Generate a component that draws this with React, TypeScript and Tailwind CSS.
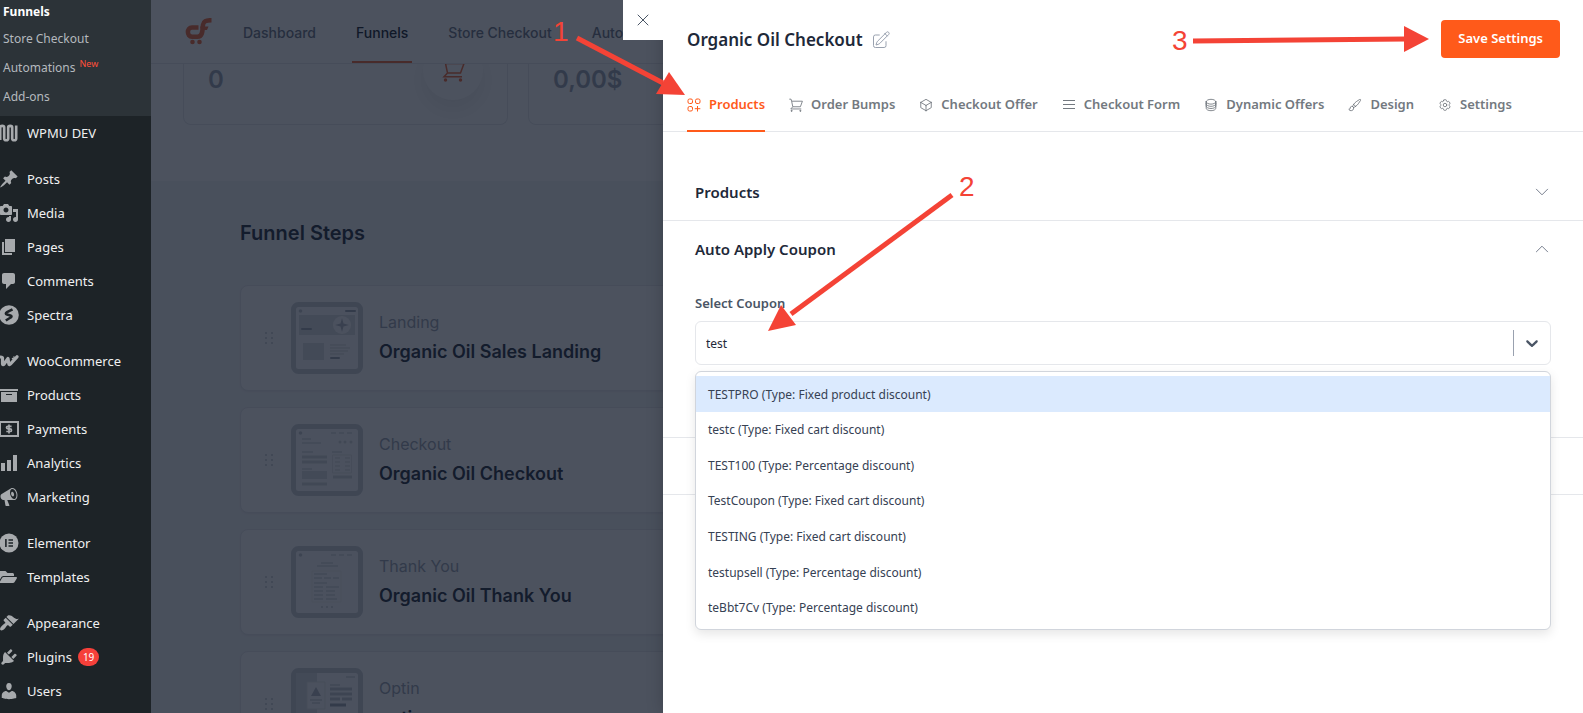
import { useState, type ReactNode } from 'react';
import clsx from 'clsx';
import { FaFolderOpen } from 'react-icons/fa';
import {
  HiOutlineChevronDown,
  HiOutlineChevronUp,
  HiOutlineCircleStack,
  HiOutlineCog6Tooth,
  HiOutlineCube,
  HiOutlinePaintBrush,
  HiOutlinePencilSquare,
  HiOutlineXMark,
} from 'react-icons/hi2';

function Dash({ d }: { d: string }) {
  return (
    <svg viewBox="0 0 20 20" className="size-5 fill-current" aria-hidden="true">
      <path fillRule="evenodd" d={d} />
    </svg>
  );
}

const ICONS = {
  post: 'M10.44 3.02l1.82-1.82 6.36 6.35-1.83 1.82c-1.05-.68-2.48-.57-3.41.36l-.75.75c-.92.93-1.04 2.35-.35 3.41l-1.83 1.82-2.41-2.41-2.8 2.79c-.42.42-3.38 2.71-3.8 2.29s1.86-3.39 2.28-3.81l2.79-2.79L4.1 9.36l1.83-1.82c1.05.69 2.48.57 3.4-.36l.75-.75c.93-.92 1.05-2.35.36-3.41z',
  media: 'M13 11V4c0-.55-.45-1-1-1h-1.67L9 1H5L3.67 3H2c-.55 0-1 .45-1 1v7c0 .55.45 1 1 1h10c.55 0 1-.45 1-1zM7 4.5c1.38 0 2.5 1.12 2.5 2.5S8.38 9.5 7 9.5 4.5 8.38 4.5 7 5.62 4.5 7 4.5zM14 6h5v10.5c0 1.38-1.12 2.5-2.5 2.5S14 17.88 14 16.5s1.12-2.5 2.5-2.5c.17 0 .34.02.5.05V9h-3V6zm-4 8.05V13h2v3.5c0 1.38-1.12 2.5-2.5 2.5S7 17.88 7 16.5 8.12 14 9.5 14c.17 0 .34.02.5.05z',
  page: 'M6 15V2h10v13H6zm-1 1h8v2H3V5h2v11z',
  comments: 'M5 2h9c1.1 0 2 .9 2 2v7c0 1.1-.9 2-2 2h-2l-5 5v-5H5c-1.1 0-2-.9-2-2V4c0-1.1.9-2 2-2z',
  archive: 'M19 4v2H1V4h18zM2 7h16v10H2V7zm11 3V9H7v1h6z',
  chart: 'M18 18V2h-4v16h4zm-6 0V7H8v11h4zm-6 0v-8H2v8h4z',
  megaphone: 'M18.15 5.94c.46 1.62.38 3.22-.02 4.48-.42 1.28-1.26 2.18-2.3 2.48-.16.06-.26.06-.4.06-.06.02-.12.02-.18.02-.06.02-.14.02-.22.02h-6.8l2.22 5.5c.02.14-.06.26-.14.34-.08.1-.24.16-.34.16H6.95c-.1 0-.26-.06-.34-.16-.08-.08-.16-.2-.14-.34l-1-5.5H4.25l-.02-.02c-.5.06-1.08-.18-1.54-.62s-.88-1.08-1.06-1.88c-.24-.8-.2-1.56-.02-2.2.18-.62.58-1.08 1.06-1.3l.02-.02 9-5.4c.1-.06.18-.1.24-.16.06-.04.14-.08.24-.12.16-.08.28-.12.5-.18 1.04-.3 2.24.1 3.22.98s1.84 2.24 2.26 3.86zm-2.58 5.98h-.02c.4-.1.74-.34 1.04-.7.58-.7.86-1.76.86-3.04 0-.64-.1-1.3-.28-1.98-.34-1.36-1.02-2.5-1.78-3.24s-1.68-1.1-2.46-.88c-.82.22-1.4.96-1.7 2-.32 1.04-.28 2.36.06 3.72.38 1.36 1 2.5 1.8 3.24.78.74 1.62 1.1 2.48.88zm-2.54-7.08c.22-.04.42-.02.62.04.38.16.76.48 1.02 1s.42 1.2.42 1.78c0 .3-.04.56-.12.8-.18.48-.44.84-.86.94-.34.1-.8-.06-1.14-.4s-.64-.86-.78-1.5c-.18-.62-.12-1.24.02-1.72s.48-.84.82-.94z',
  appearance: 'M14.48 11.06L7.41 3.99l1.5-1.5c.5-.56 2.3-.47 3.51.32 1.21.8 1.43 1.28 2.91 2.1 1.18.64 2.45 1.26 4.45.85zm-.71.71L6.7 4.7 4.93 6.47c-.39.39-.39 1.02 0 1.41l1.06 1.06c.39.39.39 1.03 0 1.42-.6.6-1.43 1.11-2.21 1.69-.35.26-.7.53-1.01.84C1.43 14.23.4 16.08 1.4 17.07c.99 1 2.84-.03 4.18-1.36.31-.31.58-.66.85-1.02.57-.78 1.08-1.61 1.69-2.21.39-.39 1.02-.39 1.41 0l1.06 1.06c.39.39 1.02.39 1.41 0z',
  plugins: 'M13.11 4.36L9.87 7.6 8 5.73l3.24-3.24c.35-.34 1.05-.2 1.56.32.52.51.66 1.21.31 1.55zm-8 1.77l.91-1.12 9.01 9.01-1.19.84c-.71.71-2.63 1.16-3.82 1.16H6.14L4.9 17.26c-.59.59-1.54.59-2.12 0-.59-.58-.59-1.53 0-2.12l1.24-1.24v-3.88c0-1.13.4-3.19 1.09-3.89zm7.26 3.97l3.24-3.24c.34-.35 1.04-.21 1.55.31.52.51.66 1.21.31 1.55l-3.24 3.25z',
  users: 'M10 9.25c-2.27 0-2.73-3.44-2.73-3.44C7 4.02 7.82 2 9.97 2c2.16 0 2.98 2.02 2.71 3.81 0 0-.41 3.44-2.68 3.44zm0 2.57L12.72 10c2.39 0 4.52 2.33 4.52 4.53v2.49s-3.65 1.13-7.24 1.13c-3.65 0-7.24-1.13-7.24-1.13v-2.49c0-2.25 1.94-4.48 4.47-4.48z',
};

function WpmuIcon() {
  return (
    <svg viewBox="0 0 20 20" className="size-5 fill-none stroke-current" strokeWidth="2.6">
      <path d="M1.2 3v14M1.2 4.4c0-2 4-2 4 0v11c0 2.4 4 2.4 4 0v-11c0-2 4-2 4 0v11c0 2.4 4 2.4 4 0V2.5" />
    </svg>
  );
}

function SpectraIcon() {
  return (
    <svg viewBox="0 0 20 20" className="size-5" aria-hidden="true">
      <circle cx="10" cy="10" r="9.8" className="fill-current" />
      <path d="M13.5 4.300L8 7.200c-1.600.9-1.400 2 0 2.400l3.400.9c1.400.4 1.500 1.300.2 2l-4.800 3" fill="none" stroke="#1d2327" strokeWidth="2.600" />
    </svg>
  );
}

function WooIcon() {
  return (
    <svg viewBox="0 0 20 20" className="size-5 fill-none stroke-current" strokeWidth="3.2" strokeLinecap="round" strokeLinejoin="round">
      <path d="M1.5 6c1 0 2 0 2 1v6c0 .9.9 1 1.4.3L9 7.500l.8 5.300c.1.900 1 1 1.500.3L18 5.800" />
      <path d="M13.500 7.500c1.500 1 2 0 1.500-1.500" strokeWidth="1.500" />
    </svg>
  );
}

function PaymentsIcon() {
  return (
    <svg viewBox="0 0 20 20" className="size-5" aria-hidden="true">
      <path d="M1 3h18v14H1z" fill="none" stroke="currentColor" strokeWidth="2" />
      <path d="M12.600 7.300H9c-2 0-2 2.500 0 2.500h2c2 0 2 2.700 0 2.700H7.300M10 5.400v9.200" fill="none" stroke="currentColor" strokeWidth="1.700" />
    </svg>
  );
}

function ElementorIcon() {
  return (
    <svg viewBox="0 0 20 20" className="size-5" aria-hidden="true">
      <circle cx="10" cy="10" r="9.5" className="fill-current" />
      <path d="M6.900 6v8M9.500 7h4.500M9.500 10h4.500M9.500 13h4.500" fill="none" stroke="#1d2327" strokeWidth="1.600" />
    </svg>
  );
}

type MenuItem = { label: string; icon: ReactNode; badge?: string };

const MENU: MenuItem[][] = [
  [{ label: 'WPMU DEV', icon: <WpmuIcon /> }],
  [
    { label: 'Posts', icon: <Dash d={ICONS.post} /> },
    { label: 'Media', icon: <Dash d={ICONS.media} /> },
    { label: 'Pages', icon: <Dash d={ICONS.page} /> },
    { label: 'Comments', icon: <Dash d={ICONS.comments} /> },
    { label: 'Spectra', icon: <SpectraIcon /> },
  ],
  [
    { label: 'WooCommerce', icon: <WooIcon /> },
    { label: 'Products', icon: <Dash d={ICONS.archive} /> },
    { label: 'Payments', icon: <PaymentsIcon /> },
    { label: 'Analytics', icon: <Dash d={ICONS.chart} /> },
    { label: 'Marketing', icon: <Dash d={ICONS.megaphone} /> },
  ],
  [
    { label: 'Elementor', icon: <ElementorIcon /> },
    { label: 'Templates', icon: <FaFolderOpen size={18} /> },
  ],
  [
    { label: 'Appearance', icon: <Dash d={ICONS.appearance} /> },
    { label: 'Plugins', icon: <Dash d={ICONS.plugins} />, badge: '19' },
    { label: 'Users', icon: <Dash d={ICONS.users} /> },
  ],
];

function Sidebar() {
  return (
    <aside className="w-[151px] shrink-0 bg-[#1d2327] font-['Noto_Sans',sans-serif] text-[13px] leading-[18px] text-[#f0f0f1]">
      <ul className="h-[116px] bg-[#2c3338] pl-[3px] text-[12px] text-[#b4b9be]">
        <li className="flex h-6 items-center font-bold text-white">
          <a href="#funnels">Funnels</a>
        </li>
        <li className="flex h-[29px] items-center">
          <a href="#store">Store Checkout</a>
        </li>
        <li className="flex h-[29px] items-center">
          <a href="#automations" className="flex items-start gap-1">
            Automations <span className="text-[9px] leading-[10px] text-[#ff4f3a]">New</span>
          </a>
        </li>
        <li className="flex h-[29px] items-center">
          <a href="#addons">Add-ons</a>
        </li>
      </ul>
      <nav className="flex flex-col gap-3">
        {MENU.map((group, i) => (
          <ul key={i}>
            {group.map((item) => (
              <li key={item.label}>
                <a href={`#${item.label}`} className="flex h-[34px] items-center">
                  <span className="-ml-px flex w-7 shrink-0 items-center text-[#a7aaad]">{item.icon}</span>
                  {item.label}
                  {item.badge && (
                    <span className="ml-1.5 flex h-[18px] items-center rounded-full bg-[#f6403a] px-[5px] text-[10px] text-white">
                      {item.badge}
                    </span>
                  )}
                </a>
              </li>
            ))}
          </ul>
        ))}
      </nav>
    </aside>
  );
}

function CartFlowsLogo() {
  return (
    <svg viewBox="0 0 27 27" className="size-[27px]" aria-label="CartFlows" fill="none" stroke="#f06434">
      <path d="M13.500 9.500H7C1.500 9.500 1.500 18.700 7 18.700h5.500c5.500 0 5-7 5.500-12 .5-3.500 2.500-4.500 8.500-4.500" strokeWidth="4.500" />
      <path d="M15 8.500h8.500l-1.500 3.500h-6" fill="#f06434" stroke="none" />
      <circle cx="7.500" cy="24" r="2.300" fill="#f06434" stroke="none" />
      <circle cx="14.500" cy="24" r="2.300" fill="#f06434" stroke="none" />
    </svg>
  );
}

function CartIcon({ className }: { className?: string }) {
  return (
    <svg viewBox="0 0 24 24" className={className} fill="none" stroke="currentColor" strokeWidth="1.500">
      <path d="M.5 2h3l1 3.500M4.500 5.500h18.500l-3.500 9.500H6.500zM6.500 15L3 18.800H21" />
      <circle cx="4.500" cy="22" r="1" fill="currentColor" />
      <circle cx="19.500" cy="22" r="1" fill="currentColor" />
    </svg>
  );
}

const THUMBS: Record<string, ReactNode> = {
  Landing: (
    <>
      <path d="M8 13h56v20H8z" fill="#dcdfe4" />
      <circle cx="51" cy="23" r="9" fill="#fcfcfd" />
      <path d="M51 16l1.500 5.500L58 23l-5.500 1.500L51 30l-1.500-5.500L44 23l5.500-1.500z" fill="#b3b9c2" />
      <path d="M12 41h21v17H12z" fill="#dcdfe4" />
      <path d="M39 43h16M39 46h20M39 49h18M39 52h14" stroke="#d1d5db" />
      <path d="M55 9h9M11 27h9M40 56h8" stroke="#9ca3af" strokeWidth="2" strokeLinecap="round" />
    </>
  ),
  Checkout: (
    <>
      <path d="M11 15h9M11 19h19M40 9h5M48 9h5M56 9h5M11 28h11M41 28h10M11 45h10" stroke="#d6d9df" strokeWidth="1.500" />
      <circle cx="49" cy="18" r="1.500" fill="#d1d5db" />
      <circle cx="54" cy="18" r="1.500" fill="#d1d5db" />
      <circle cx="60" cy="18" r="1.500" fill="#d1d5db" />
      <path d="M11 33h25M11 38h25M11 60h25M42 53h19" stroke="#d1d5db" strokeWidth="3" />
      <path d="M11 47h25v8H11z" fill="#dcdfe4" />
      <path d="M41.500 31h19v18h-19z" fill="none" stroke="#e5e7eb" />
      <path d="M44 34h5M54 34h5M44 38h5M54 38h5M44 42h5M54 42h5M44 46h5M54 46h5" stroke="#d1d5db" />
    </>
  ),
  'Thank You': (
    <>
      <path d="M40 9h5M48 9h5M56 9h5M30 17h12M26 20h21" stroke="#d6d9df" strokeWidth="1.500" />
      <path d="M21 25h29v31H21z" fill="none" stroke="#eef0f2" />
      <path d="M23 28h13M23 32h8M33 32h7M42 32h6M23 37h13M23 41h9M35 41h13M23 45h9M35 45h9M23 49h9M35 49h9M23 53h9M35 53h11" stroke="#d6d9df" strokeWidth="1.500" />
      <path d="M30 61h2M35 61h2M40 61h2" stroke="#d6d9df" strokeWidth="2" />
    </>
  ),
  Optin: (
    <>
      <path d="M5 5h21v62H5z" fill="#dcdfe4" />
      <path d="M16 14h18v27H16z" fill="#fcfcfd" stroke="#e5e7eb" />
      <path d="M25 19l5 9H20z" fill="#b3b9c2" />
      <path d="M19 32h12M21 35h8M39 17h10M55 9h9" stroke="#d1d5db" strokeWidth="1.500" />
      <path d="M39 21h22M39 26h22M39 31h10M51 31h10" stroke="#c3c8cf" strokeWidth="3" />
      <path d="M39 37h16" stroke="#9ca3af" strokeWidth="3" />
    </>
  ),
};

function StepThumb({ type }: { type: string }) {
  return (
    <svg viewBox="0 0 72 72" className="size-[72px] shrink-0" aria-hidden="true">
      <rect x="2.500" y="2.500" width="67" height="67" rx="5" fill="#fcfcfd" stroke="#c9cdd4" strokeWidth="5" />
      <circle cx="9.500" cy="9" r="1.800" fill="#c3c8cf" />
      {THUMBS[type]}
    </svg>
  );
}

const STEPS = [
  { type: 'Landing', title: 'Organic Oil Sales Landing' },
  { type: 'Checkout', title: 'Organic Oil Checkout' },
  { type: 'Thank You', title: 'Organic Oil Thank You' },
  { type: 'Optin', title: 'optin' },
];

function FunnelPage() {
  return (
    <main className="min-w-0 flex-1 overflow-hidden bg-[#f4f5f7] font-['Inter',sans-serif]">
      <header className="relative z-10 flex h-16 items-center border-b border-gray-200 bg-white pl-[34px]">
        <CartFlowsLogo />
        <nav className="ml-[11px] flex h-full text-[14px] font-medium text-gray-500">
          {['Dashboard', 'Funnels', 'Store Checkout', 'Automations'].map((item) => (
            <a
              key={item}
              href={`#${item}`}
              className={clsx(
                'mx-4 flex items-center border-b-2 px-1 pt-1 whitespace-nowrap',
                item === 'Funnels' ? 'border-b-[#f06434] text-gray-900' : 'border-b-transparent'
              )}
            >
              {item}
            </a>
          ))}
        </nav>
      </header>

      <section className="grid grid-cols-4 gap-5 bg-white pr-10 pb-14 pl-8">
        {['0', '0,00$', '0,00$', '0'].map((value, i) => (
          <div key={i} className="flex h-[61px] items-start justify-between rounded-b-lg border border-t-0 border-gray-200 px-6">
            <p className="text-[24px] leading-8 font-semibold text-gray-400">{value}</p>
            <span className="-mt-6 flex size-[60px] shrink-0 items-center justify-center rounded-full bg-white text-[#f06434] shadow-[0_10px_20px_rgba(0,0,0,0.08)]">
              <CartIcon className="size-6" />
            </span>
          </div>
        ))}
      </section>

      <section className="pt-9 pr-10 pl-[89px]">
        <h2 className="text-[20px] leading-8 font-semibold text-gray-800">Funnel Steps</h2>
        <div className="mt-9 flex flex-col gap-4">
          {STEPS.map((step) => (
            <div key={step.type} className="flex h-[106px] items-center rounded-lg border border-gray-200 bg-white pl-6 shadow-xs">
              <span className="mr-[18px] grid grid-cols-2 gap-x-1 gap-y-[3px]">
                {[0, 1, 2, 3, 4, 5].map((dot) => (
                  <i key={dot} className="size-[2px] bg-gray-300" />
                ))}
              </span>
              <StepThumb type={step.type} />
              <div className="ml-4">
                <p className="text-[16px] leading-6 text-gray-400">{step.type}</p>
                <h3 className="mt-1 text-[18px] leading-7 font-semibold text-gray-800">{step.title}</h3>
              </div>
            </div>
          ))}
        </div>
      </section>
    </main>
  );
}

const TABS = [
  { label: 'Products', icon: <ProductsIcon /> },
  { label: 'Order Bumps', icon: <CartIcon className="size-[14px]" /> },
  { label: 'Checkout Offer', icon: <HiOutlineCube size={14} /> },
  { label: 'Checkout Form', icon: <LinesIcon /> },
  { label: 'Dynamic Offers', icon: <HiOutlineCircleStack size={14} /> },
  { label: 'Design', icon: <HiOutlinePaintBrush size={14} /> },
  { label: 'Settings', icon: <HiOutlineCog6Tooth size={14} /> },
];

function ProductsIcon() {
  return (
    <svg viewBox="0 0 14 14" className="size-[14px]" fill="none" stroke="currentColor">
      <rect x="1" y="1" width="4.500" height="4.500" rx="1.500" />
      <rect x="8.500" y="1" width="4.500" height="4.500" rx="1.500" />
      <rect x="1" y="8.500" width="4.500" height="4.500" rx="1.500" />
      <path d="M10.500 8v5.500M7.800 10.700h5.500" />
    </svg>
  );
}

function LinesIcon() {
  return (
    <svg viewBox="0 0 14 14" className="size-[14px]" fill="none" stroke="currentColor">
      <path d="M1 2.500h12M1 6.500h12M1 10.500h12" />
    </svg>
  );
}

const COUPONS = [
  'TESTPRO (Type: Fixed product discount)',
  'testc (Type: Fixed cart discount)',
  'TEST100 (Type: Percentage discount)',
  'TestCoupon (Type: Fixed cart discount)',
  'TESTING (Type: Fixed cart discount)',
  'testupsell (Type: Percentage discount)',
  'teBbt7Cv (Type: Percentage discount)',
];

function CouponSelect() {
  const [query, setQuery] = useState('test');
  const [active, setActive] = useState(0);

  return (
    <div className="relative">
      <label htmlFor="coupon" className="block text-[13px] leading-5 font-semibold text-gray-600">
        Select Coupon
      </label>
      <div className="mt-2 flex h-11 items-center rounded-md border border-gray-200">
        <input
          id="coupon"
          role="combobox"
          aria-expanded="true"
          aria-controls="coupon-list"
          value={query}
          onChange={(e) => setQuery(e.target.value)}
          className="min-w-0 flex-1 px-2.5 pt-0.5 text-[12px] text-gray-800 outline-none"
        />
        <button type="button" aria-label="Toggle coupons" className="flex h-[26px] w-[37px] items-center justify-center border-l border-gray-400 text-gray-600">
          <svg viewBox="0 0 20 20" className="size-5 fill-current">
            <path d="M4.516 7.548c.436-.446 1.043-.481 1.576 0L10 11.295l3.908-3.747c.533-.481 1.141-.446 1.574 0 .436.445.408 1.197 0 1.615-.406.418-4.695 4.502-4.695 4.502a1.095 1.095 0 0 1-1.576 0S4.924 9.581 4.516 9.163s-.436-1.17 0-1.615z" />
          </svg>
        </button>
      </div>
      <ul
        id="coupon-list"
        role="listbox"
        className="absolute inset-x-0 top-full z-10 mt-1.5 grid h-[259px] auto-rows-fr rounded-md border border-gray-300 bg-white py-1 shadow-[0_4px_11px_rgba(0,0,0,0.1)]"
      >
        {COUPONS.map((coupon, i) => (
          <li
            key={coupon}
            role="option"
            aria-selected={i === active}
            onMouseEnter={() => setActive(i)}
            className={clsx('flex items-center px-3 pt-0.5 text-[12px] text-gray-700', i === active && 'bg-blue-100')}
          >
            {coupon}
          </li>
        ))}
      </ul>
    </div>
  );
}

function PanelHeading({ title, open }: { title: string; open?: boolean }) {
  const Chevron = open ? HiOutlineChevronUp : HiOutlineChevronDown;
  return (
    <button type="button" aria-expanded={!!open} className="flex h-14 w-full items-center justify-between text-[15px] font-semibold text-gray-800">
      {title}
      <Chevron size={18} className="text-gray-500" strokeWidth={1.2} />
    </button>
  );
}

// numbered walkthrough arrows, drawn in the drawer's own coordinates
function Annotations() {
  return (
    <svg className="pointer-events-none absolute top-0 left-0 z-20 h-[360px] w-[920px] overflow-visible" fill="#f44336" aria-hidden="true">
      <g stroke="#f44336" strokeWidth="5">
        <path d="M-86 38L0 83" />
        <path d="M289 195L128 314" />
        <path d="M530 41L743 39" />
      </g>
      <path d="M22 95L-7 94 6 72z" />
      <path d="M105 331L118 305 133 325z" />
      <path d="M766 39L741 26V52z" />
      <g className="font-['Liberation_Sans',sans-serif] text-[28px]">
        <text x="-110" y="41">1</text>
        <text x="296" y="196">2</text>
        <text x="509" y="50">3</text>
      </g>
    </svg>
  );
}

function CheckoutDrawer() {
  const [tab, setTab] = useState('Products');

  return (
    <div role="dialog" aria-label="Organic Oil Checkout" className="absolute inset-y-0 right-0 w-[920px] max-w-full bg-white font-['Noto_Sans',sans-serif] shadow-[0_0_16px_rgba(0,0,0,0.2)]">
      <button type="button" aria-label="Close" className="absolute top-0 right-full flex size-10 items-center justify-center bg-white text-gray-600">
        <HiOutlineXMark size={20} strokeWidth={1.2} />
      </button>

      <div className="flex h-[78px] items-center justify-between pr-[23px] pl-6">
        <div className="flex items-center gap-2 pt-0.5">
          <h1 className="text-[17px] font-semibold text-gray-800">Organic Oil Checkout</h1>
          <button type="button" aria-label="Rename step" className="text-gray-400">
            <HiOutlinePencilSquare size={20} strokeWidth={1.2} />
          </button>
        </div>
        <button type="button" className="h-[38px] rounded bg-[#ff5a1a] px-[17px] text-[13px] font-semibold text-white">
          Save Settings
        </button>
      </div>

      <nav className="flex h-[54px] gap-6 border-b border-gray-200 pl-6 text-[13px] font-semibold text-[#737980]">
        {TABS.map(({ label, icon }) => (
          <button
            key={label}
            type="button"
            onClick={() => setTab(label)}
            className={clsx(
              '-mb-px flex items-center gap-2 border-b-2 pt-0.5 whitespace-nowrap',
              tab === label ? 'border-[#ff5a1a] text-[#ff5a1a]' : 'border-transparent'
            )}
          >
            {icon}
            {label}
          </button>
        ))}
      </nav>

      <div className="pt-8">
        <section className="border-b border-gray-200 px-8">
          <PanelHeading title="Products" />
        </section>
        <section className="border-b border-gray-200 px-8 pb-[72px]">
          <PanelHeading title="Auto Apply Coupon" open />
          <div className="pt-4">
            <CouponSelect />
          </div>
        </section>
        <section className="h-[57px] border-b border-gray-200" />
      </div>

      <Annotations />
    </div>
  );
}

export default function App() {
  return (
    <div className="relative flex h-screen overflow-hidden">
      <Sidebar />
      <div className="flex min-w-0 flex-1">
        <FunnelPage />
      </div>
      <div className="absolute inset-y-0 right-0 left-[151px] z-20 bg-gray-900/75" />
      <div className="absolute inset-0 left-[151px] z-30 overflow-hidden">
        <CheckoutDrawer />
      </div>
    </div>
  );
}
